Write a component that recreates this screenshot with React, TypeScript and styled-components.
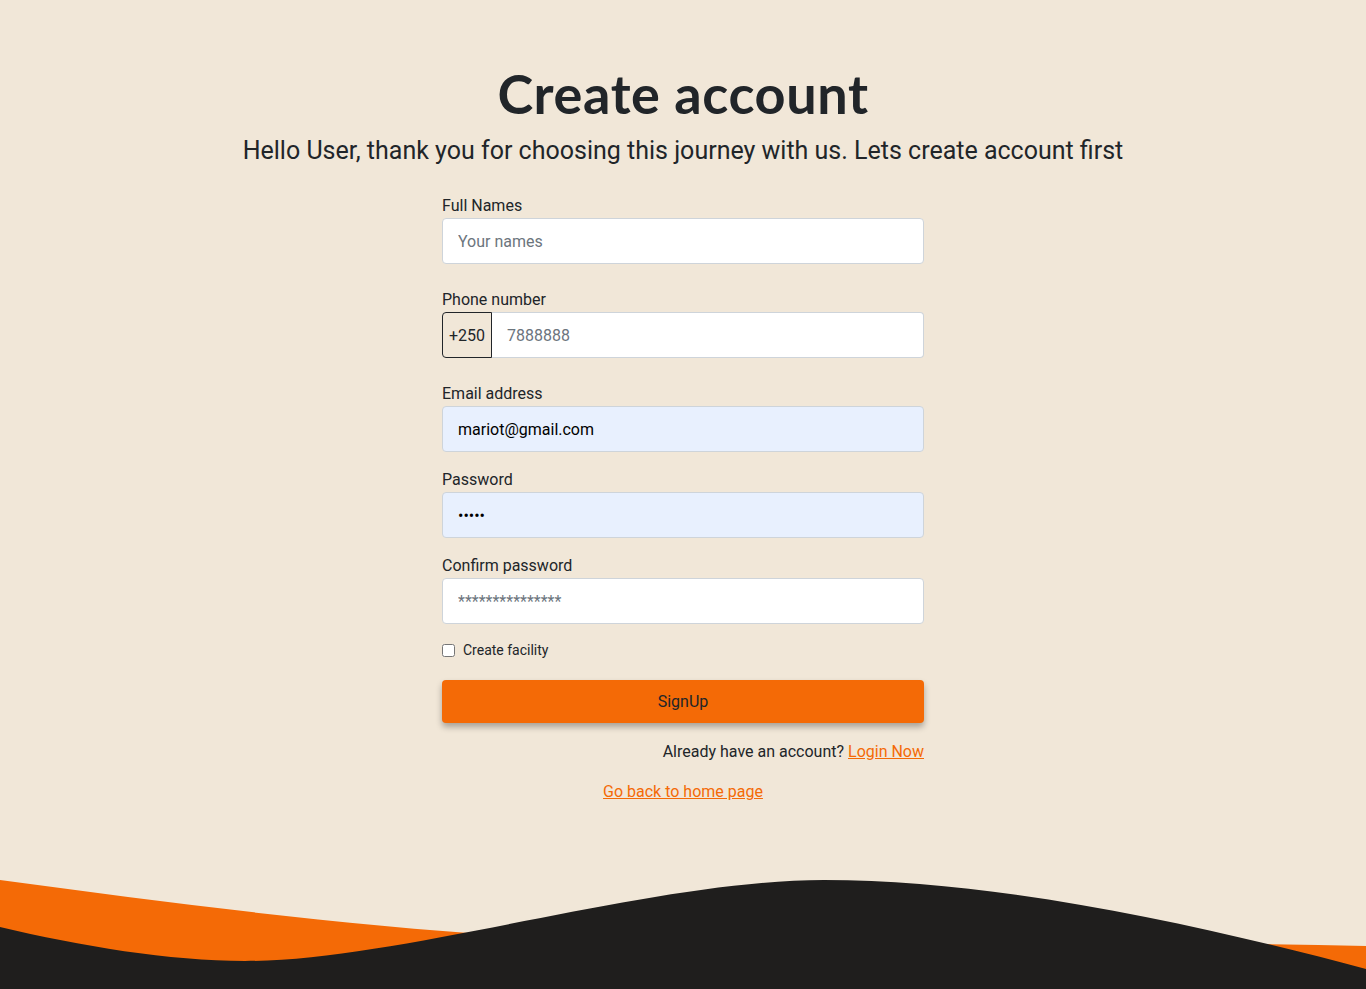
import React from "react";
import styled, { createGlobalStyle } from "styled-components";

const GlobalStyle = createGlobalStyle`
  *, *::before, *::after { box-sizing: border-box; }
  body {
    margin: 0;
    background: #f1e7d8;
    font-family: Roboto, "Liberation Sans", sans-serif;
    color: #212529;
  }
`;

const Page = styled.main`
  min-height: 100vh;
  display: flex;
  flex-direction: column;
  align-items: center;
`;

const Title = styled.h1`
  margin: 62px 0 0;
  font-family: Lato, "Open Sans", sans-serif;
  font-weight: 700;
  font-size: 54px;
  line-height: 1.2;
  letter-spacing: 0.6px;
  color: #212529;
`;

const Subtitle = styled.p`
  margin: 5px 0 0;
  font-size: 25px;
  line-height: 1.5;
  font-weight: 400;
`;

const Form = styled.form`
  width: 482px;
  margin-top: 25px;
  display: flex;
  flex-direction: column;
`;

const Group = styled.div<{ $gap: number }>`
  display: flex;
  flex-direction: column;
  margin-bottom: ${(p) => p.$gap}px;
`;

const Label = styled.label`
  font-size: 16px;
  line-height: 24px;
`;

const Input = styled.input<{ $filled?: boolean }>`
  height: 46px;
  width: 100%;
  padding: 0 15px;
  border: 1px solid #ced4da;
  border-radius: 4px;
  background: ${(p) => (p.$filled ? "#e8f0fe" : "#fff")};
  font-family: Roboto, "Liberation Sans", sans-serif;
  font-size: 16px;
  color: #000;
  outline: none;
  &::placeholder { color: #6c757d; }
`;

const InputRow = styled.div`
  display: flex;
  ${Input} {
    border-left: none;
    border-radius: 0 4px 4px 0;
  }
`;

const Prefix = styled.span`
  flex: 0 0 50px;
  height: 46px;
  display: flex;
  align-items: center;
  justify-content: center;
  border: 1px solid #212529;
  border-radius: 4px 0 0 4px;
  font-size: 16px;
`;

const CheckRow = styled.label`
  display: flex;
  align-items: center;
  gap: 8px;
  font-size: 14px;
  margin-top: 18px;
  input { margin: 0; width: 13px; height: 13px; }
`;

const Button = styled.button`
  margin-top: 22px;
  height: 43px;
  border: none;
  border-radius: 4px;
  background: #f46a06;
  color: #212529;
  font-family: Roboto, "Liberation Sans", sans-serif;
  font-size: 16px;
  box-shadow: 0 4px 6px rgba(0, 0, 0, 0.3);
  cursor: pointer;
`;

const Already = styled.p`
  margin: 17px 0 0;
  text-align: right;
  font-size: 16px;
  line-height: 24px;
`;

const Link = styled.a`
  color: #f46a06;
  text-decoration: underline;
`;

const Home = styled.p`
  margin: 16px 0 0;
  text-align: center;
  font-size: 16px;
  line-height: 24px;
`;

const Wave = styled.svg`
  display: block;
  width: 100%;
  height: 109px;
  margin-top: auto;
`;

export default function App() {
  return (
    <Page>
      <GlobalStyle />
      <Title>Create account</Title>
      <Subtitle>Hello User, thank you for choosing this journey with us. Lets create account first</Subtitle>
      <Form onSubmit={(e) => e.preventDefault()}>
        <Group $gap={24}>
          <Label>Full Names</Label>
          <Input placeholder="Your names" />
        </Group>
        <Group $gap={24}>
          <Label>Phone number</Label>
          <InputRow>
            <Prefix>+250</Prefix>
            <Input placeholder="7888888" />
          </InputRow>
        </Group>
        <Group $gap={16}>
          <Label>Email address</Label>
          <Input $filled defaultValue="mariot@gmail.com" />
        </Group>
        <Group $gap={16}>
          <Label>Password</Label>
          <Input $filled type="password" defaultValue="12345" />
        </Group>
        <Group $gap={0}>
          <Label>Confirm password</Label>
          <Input type="password" placeholder="***************" />
        </Group>
        <CheckRow>
          <input type="checkbox" />
          Create facility
        </CheckRow>
        <Button type="submit">SignUp</Button>
        <Already>
          Already have an account? <Link href="#">Login Now</Link>
        </Already>
        <Home>
          <Link href="#">Go back to home page</Link>
        </Home>
      </Form>
      <Wave viewBox="0 0 1366 109" preserveAspectRatio="none">
        <path d="M0 0 C200 27 400 53 600 60 C800 63 1100 60 1366 66 L1366 109 L0 109 Z" fill="#f46a06" />
        <path
          d="M0 47 C80 66 170 81 245 81 C400 81 650 0 824 0 C1000 0 1200 45 1366 89 L1366 109 L0 109 Z"
          fill="#1f1e1d"
        />
      </Wave>
    </Page>
  );
}
